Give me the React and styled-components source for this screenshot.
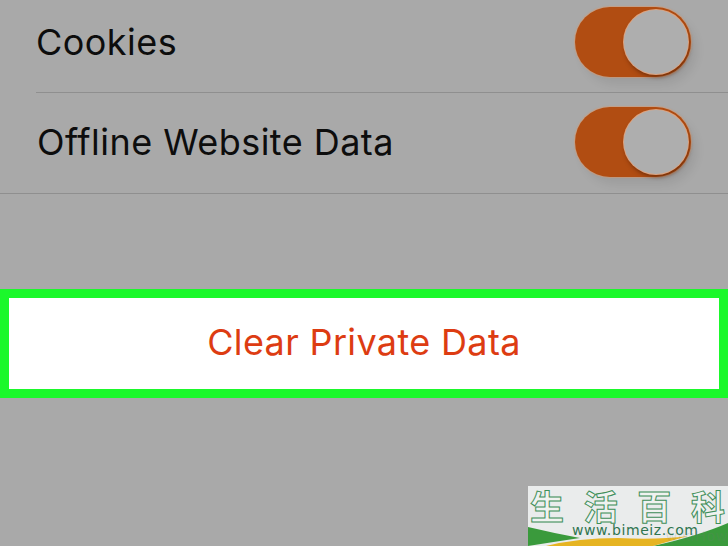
import React from "react";
import styled, { createGlobalStyle } from "styled-components";

const Global = createGlobalStyle`
  html, body { margin: 0; padding: 0; background: #a9a9a9; }
  body { width: 728px; height: 546px; overflow: hidden; font-family: Inter, "Liberation Sans", sans-serif; }
`;

const Page = styled.div`
  position: relative;
  width: 728px;
  height: 546px;
  overflow: hidden;
  background: #a9a9a9;
`;

const List = styled.div`
  margin-top: -7px;
  border-bottom: 1px solid #8f8f8f;
`;

const Row = styled.div`
  height: 100px;
  box-sizing: border-box;
  margin-left: ${(p) => (p.$last ? "37px" : "36px")};
  padding: 0 37px 2px 0;
  display: flex;
  align-items: center;
  justify-content: space-between;
  border-bottom: ${(p) => (p.$last ? "none" : "1px solid #8f8f8f")};
`;

const Label = styled.span`
  font-size: 36px;
  letter-spacing: 0.45px;
  color: #0d0d0d;
`;

const Toggle = styled.div`
  position: relative;
  width: 116px;
  height: 70px;
  border-radius: 35px;
  background: #b14d12;
  box-shadow: 0 0 1px 1px rgba(226, 150, 100, 0.5), 6px 8px 10px rgba(0, 0, 0, 0.07);
`;

const Knob = styled.div`
  position: absolute;
  top: 3px;
  right: 3px;
  width: 64px;
  height: 64px;
  border-radius: 50%;
  background: #aeaeae;
  box-shadow: 0 0 0 1px #dca482, 1px 3px 4px rgba(70, 25, 0, 0.6);
`;

const ActionWrap = styled.div`
  margin-top: 95px;
  height: 109px;
  box-sizing: border-box;
  border: 9px solid #1bf82b;
  padding-bottom: 3px;
  background: #fff;
  display: flex;
  align-items: center;
  justify-content: center;
`;

const Action = styled.span`
  font-size: 36px;
  letter-spacing: 0.35px;
  color: #dd3c12;
`;

const Logo = styled.div`
  position: absolute;
  right: 0;
  bottom: 0;
  width: 200px;
  height: 60px;
  background: #eaecec;
  overflow: hidden;
`;

const LogoArt = styled.svg`
  position: absolute;
  inset: 0;
  width: 200px;
  height: 60px;
`;

const Chars = styled.div`
  display: flex;
  justify-content: space-between;
  padding: 0 3px 0 2px;
  font-family: "Noto Sans CJK SC", sans-serif;
  font-size: 34px;
  line-height: 40px;
  height: 40px;
  font-weight: 700;
  color: #f0f2f0;
  -webkit-text-stroke: 1px #3f8f5a;
  position: relative;
`;

const Url = styled.div`
  position: absolute;
  left: 44px;
  top: 35px;
  font-family: "DejaVu Sans", sans-serif;
  font-size: 14px;
  letter-spacing: 0.6px;
  line-height: 18px;
  color: #2f7550;
`;

const Ghost = styled.div`
  position: absolute;
  right: 0;
  bottom: 2px;
  font-family: "Liberation Sans", sans-serif;
  font-size: 15px;
  letter-spacing: 1px;
  line-height: 16px;
  color: rgba(120, 120, 120, 0.18);
`;

export default function App() {
  return (
    <Page>
      <Global />
      <List>
        <Row>
          <Label>Cookies</Label>
          <Toggle><Knob /></Toggle>
        </Row>
        <Row $last>
          <Label>Offline Website Data</Label>
          <Toggle><Knob /></Toggle>
        </Row>
      </List>
      <ActionWrap>
        <Action>Clear Private Data</Action>
      </ActionWrap>
      <Logo>
        <LogoArt viewBox="0 0 200 60">
          <path d="M0 41 Q25 47 52 52 Q25 56 0 60 Z" fill="#3a9a3c" />
          <path d="M200 37 Q170 50 125 60 L200 60 Z" fill="#3a9a3c" />
          <path d="M18 60 Q50 52 90 52 Q130 54 160 50 L125 60 Z" fill="#e6b422" />
        </LogoArt>
        <Chars>
          <span>生</span><span>活</span><span>百</span><span>科</span>
        </Chars>
        <Url>www.bimeiz.com</Url>
        <Ghost>wikiHow</Ghost>
      </Logo>
    </Page>
  );
}
